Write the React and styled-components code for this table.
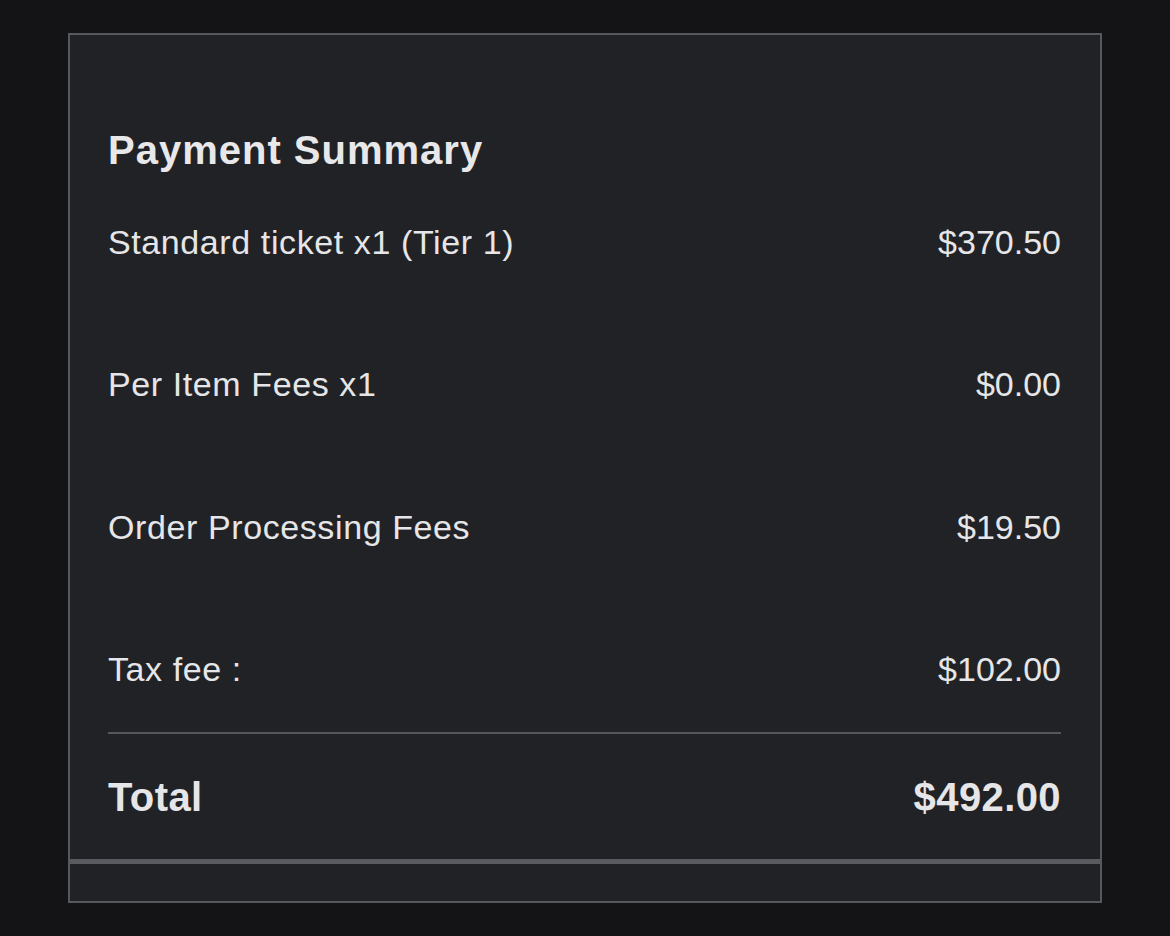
import React from "react";
import styled, { createGlobalStyle } from "styled-components";

const items = [
  { label: "Standard ticket x1 (Tier 1)", amount: "$370.50" },
  { label: "Per Item Fees x1", amount: "$0.00" },
  { label: "Order Processing Fees", amount: "$19.50" },
  { label: "Tax fee :", amount: "$102.00" },
];

const App = () => {
  return (
    <Page>
      <GlobalStyle />
      <Card>
        <Summary>
          <Title>Payment Summary</Title>
          <List>
            {items.map((item) => (
              <Row key={item.label}>
                <span>{item.label}</span>
                <span>{item.amount}</span>
              </Row>
            ))}
          </List>
          <Divider />
          <TotalRow>
            <span>Total</span>
            <span>$492.00</span>
          </TotalRow>
        </Summary>
        <Footer />
      </Card>
    </Page>
  );
};

export default App;

const GlobalStyle = createGlobalStyle`
  html, body {
    margin: 0;
    padding: 0;
    background: #141416;
  }

  body {
    font-family: "Liberation Sans", Arial, sans-serif;
    color: #e6e6e8;
  }
`;

const Page = styled.div`
  min-height: 936px;
  padding: 33px 0 0 68px;
  box-sizing: border-box;
`;

const Card = styled.div`
  width: 1034px;
  box-sizing: border-box;
  border: 2px solid #56585d;
  background: #212226;
`;

const Summary = styled.div`
  padding: 91px 39px 38px 38px;
  border-bottom: 5px solid #595b60;
`;

const Title = styled.h2`
  margin: 0 0 48px;
  font-size: 40px;
  line-height: 48px;
  font-weight: 700;
  letter-spacing: 1px;
  color: #e8e8ea;
`;

const List = styled.div`
  display: flex;
  flex-direction: column;
  gap: 102.3px;
`;

const Row = styled.div`
  display: flex;
  justify-content: space-between;
  align-items: center;
  font-size: 34px;
  line-height: 40px;

  > span:first-child {
    letter-spacing: 0.6px;
  }
`;

const Divider = styled.div`
  height: 2px;
  margin: 43px 0 39px;
  background: #55575c;
`;

const TotalRow = styled.div`
  display: flex;
  justify-content: space-between;
  align-items: center;
  font-size: 40px;
  line-height: 48px;
  font-weight: 700;
  letter-spacing: 0.4px;
`;

const Footer = styled.div`
  height: 37px;
`;
